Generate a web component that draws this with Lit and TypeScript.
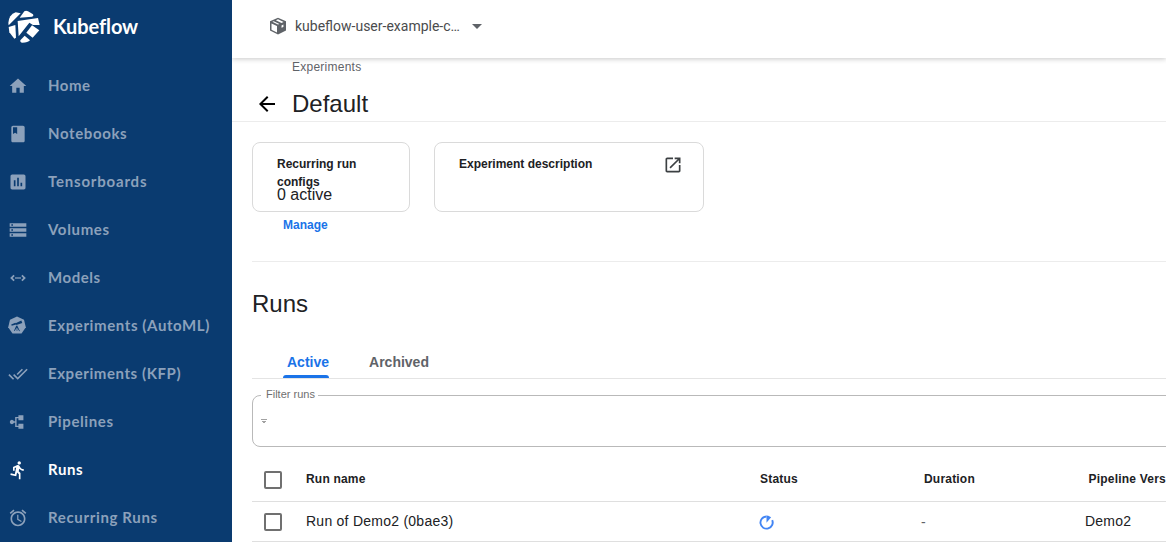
import { LitElement, html, svg, css } from "lit";
import { customElement, property } from "lit/decorators.js";
import { classMap } from "lit/directives/class-map.js";
import { styleMap } from "lit/directives/style-map.js";

interface NavItem {
  label: string;
  icon: string;
  tracking: number;
  active?: boolean;
}

const ICONS: Record<string, unknown> = {
  home: svg`<path d="M10 20v-6h4v6h5v-8h3L12 3 2 12h3v8z"/>`,
  book: svg`<path d="M18 2H6c-1.100 0-2 .9-2 2v16c0 1.100.9 2 2 2h12c1.100 0 2-.9 2-2V4c0-1.100-.9-2-2-2zM6 4h5v8l-2.500-1.500L6 12V4z"/>`,
  chart: svg`<path d="M19 3H5c-1.100 0-2 .9-2 2v14c0 1.100.9 2 2 2h14c1.100 0 2-.9 2-2V5c0-1.100-.9-2-2-2zM9 17H7v-7h2v7zm4 0h-2V7h2v10zm4 0h-2v-4h2v4z"/>`,
  storage: svg`<path d="M2 20h20v-4H2v4zm2-3h2v2H4v-2zM2 4v4h20V4H2zm4 3H4V5h2v2zm-4 7h20v-4H2v4zm2-3h2v2H4v-2z"/>`,
  ethernet: svg`<path d="M6.600 8L2.600 12l4 4 1.500-1.500L5.600 12l2.500-2.500zM17.400 8l4 4-4 4-1.500-1.500 2.500-2.500-2.500-2.500zM8.600 11h2v2h-2zM11 11h2v2h-2zM13.400 11h2v2h-2z"/>`,
  doneAll: svg`<path d="M18 7l-1.410-1.410-6.340 6.340 1.410 1.410L18 7zm4.240-1.410L11.660 16.170 7.480 12l-1.410 1.410L11.660 19l12-12-1.420-1.410zM.41 13.410L6 19l1.410-1.410L1.830 12 .41 13.410z"/>`,
  run: svg`<path d="M13.490 5.480c1.100 0 2-.9 2-2s-.9-2-2-2-2 .9-2 2 .9 2 2 2zm-3.600 13.900l1-4.400 2.100 2v6h2v-7.500l-2.100-2 .6-3c1.300 1.500 3.300 2.500 5.500 2.500v-2c-1.900 0-3.500-1-4.300-2.400l-1-1.600c-.4-.6-1-1-1.700-1-.3 0-.5.1-.8.1l-5.200 2.200v4.700h2v-3.400l1.800-.7-1.600 8.100-4.900-1-.4 2 7 1.400z"/>`,
  alarm: svg`<path d="M22 5.720l-4.600-3.860-1.290 1.530 4.600 3.860L22 5.720zM7.880 3.390L6.600 1.860 2 5.710l1.290 1.530 4.590-3.850zM12.500 8H11v6l4.750 2.850.75-1.230-4-2.370V8zM12 4c-4.970 0-9 4.030-9 9s4.020 9 9 9c4.970 0 9-4.030 9-9s-4.030-9-9-9zm0 16c-3.870 0-7-3.130-7-7s3.130-7 7-7 7 3.130 7 7-3.130 7-7 7z"/>`,
  pipeline: svg`<path d="M12.500 3.800h6v6h-6V7.500h-2.200v9h2.200v-2.300h6v6h-6V18H8.600v-5H7.200a2.600 2.600 0 1 1 0-2h1.400V6h3.900z"/>`,
  telescope: svg`<path d="M10 1.500l7 3.200 1.800 7.500-4.300 6.300H5.500L1.200 12.200 3 4.700z"/><path class="cut" d="M4.200 9.600l4.200-1.900.2.500 5.700-2.700 1 2.400-5.900 2.100-.2-.5-4.500 1.300zM9.200 10.800l1-.3 2.700 5.500-.7.300-1.900-3.600v3.400h-.6v-3.500l-2 3.500-.7-.3z"/>`,
  back: svg`<path d="M20 11H7.830l5.590-5.590L12 4l-8 8 8 8 1.410-1.410L7.830 13H20v-2z"/>`,
  open: svg`<path d="M19 19H5V5h7V3H5c-1.110 0-2 .9-2 2v14c0 1.100.89 2 2 2h14c1.100 0 2-.9 2-2v-7h-2v7zM14 3v2h3.590l-9.830 9.830 1.410 1.410L19 6.410V10h2V3h-7z"/>`,
  box: svg`<path fill-rule="evenodd" d="M12 2l9.600 4.200v11.300L12 22.300 2.400 17.500V6.200zM4.200 9v7.500l6.600 3.300v-7.700zM5.200 7l6.800 3.300 1.700-.8-6.800-3.200zM9.400 5.200l6.800 3.100 2.500-1.200L12 4zM16.200 11.300v2.900l2.300-1.100v-2.900z"/>`,
  progress: svg`<path d="M12 2v2.800A7.300 7.300 0 1 0 18.800 9.300l2.500-1.300A10 10 0 1 1 12 2z"/><path d="M12 12.500V2l2.500.3 4 2.300z"/>`,
};

const NAV: NavItem[] = [
  { label: "Home", icon: "home", tracking: 0.5 },
  { label: "Notebooks", icon: "book", tracking: 0.62 },
  { label: "Tensorboards", icon: "chart", tracking: 0.8 },
  { label: "Volumes", icon: "storage", tracking: 0.65 },
  { label: "Models", icon: "ethernet", tracking: 0.55 },
  { label: "Experiments (AutoML)", icon: "telescope", tracking: 0.6 },
  { label: "Experiments (KFP)", icon: "doneAll", tracking: 0.57 },
  { label: "Pipelines", icon: "pipeline", tracking: 0.6 },
  { label: "Runs", icon: "run", tracking: 0.6, active: true },
  { label: "Recurring Runs", icon: "alarm", tracking: 0.65 },
];

@customElement("kf-icon")
class KfIcon extends LitElement {
  @property() name = "";
  static styles = css`
    :host { display: block; width: 20px; height: 20px; flex: none; }
    .icon { display: block; width: 100%; height: 100%; fill: currentColor; }
    .cut { fill: #0a3b70; }
  `;
  render() {
    const box = this.name === "telescope" ? "0 0 20 20" : "0 0 24 24";
    return html`<svg class="icon" viewBox=${box}>${ICONS[this.name]}</svg>`;
  }
}

@customElement("kf-sidebar")
class KfSidebar extends LitElement {
  static styles = css`
    :host { display: block; width: 232px; height: 542px; flex: none; background: #0a3b70; overflow: hidden;
      font-family: Lato, "Open Sans", sans-serif; font-weight: 700; }
    .brand { display: flex; align-items: center; height: 62px; box-sizing: border-box; padding: 0 0 10px 8px; color: #fff; }
    .logo { width: 32px; height: 33px; fill: #fff; }
    .name { margin-left: 13px; font-size: 20px; letter-spacing: -0.1px; line-height: 24px; }
    .item { display: flex; align-items: center; height: 48px; padding-left: 8px; color: #8ca1bb; }
    .item.active { color: #fff; }
    .label { margin: -2px 0 0 20px; font-size: 15px; line-height: 20px; white-space: nowrap; }
    .telescope { margin: -3px 1.500px 0 -1.500px; }
  `;
  render() {
    return html`
      <div class="brand">
        <svg class="logo" viewBox="24 28 96 99">
          <path d="M26 74Q23 60 31 47Q37 38 47 35L62 38Z"/>
          <path d="M59 51L73 32Q78 29 84 32L99 41Q102 47 96 48Z"/>
          <path d="M26 79L46 73L48 111L43 114L28 95Z"/>
          <path d="M53 61L114 52L119 73L99 73L88 66L56 107Z"/>
          <path d="M96 74L118 89L98 111L79 96Z"/>
          <path d="M74 105L90 119Q84 126 67 126Q60 126 61 119Z"/>
        </svg>
        <span class="name">Kubeflow</span>
      </div>
      ${NAV.map(
        (n) => html`<div class=${classMap({ item: true, active: !!n.active })}>
          <kf-icon class=${n.icon} name=${n.icon}></kf-icon>
          <span class="label" style=${styleMap({ letterSpacing: `${n.tracking}px` })}>${n.label}</span>
        </div>`
      )}
    `;
  }
}

@customElement("app-root")
class AppRoot extends LitElement {
  static styles = css`
    :host { display: flex; width: 1166px; height: 542px; overflow: hidden; background: #fff; color: #202124;
      font-family: "Liberation Sans", Arial, sans-serif; }
    .main { flex: 1; min-width: 0; overflow: hidden; display: flex; flex-direction: column; }
    .topbar { flex: none; height: 58px; box-sizing: border-box; display: flex; align-items: center; padding: 0 0 6px 36px;
      box-shadow: 0 1px 5px rgba(0, 0, 0, 0.22); color: #5f6368; font-family: Roboto, sans-serif; font-size: 14px; }
    .namespace { margin-left: 7px; color: #4a4b4d; width: 166px; white-space: nowrap; }
    .caret { margin-left: 11px; border: 5px solid transparent; border-top-color: #5f6368; border-bottom: 0; }
    .pagehead { flex: none; height: 64px; box-sizing: border-box; border-bottom: 1px solid #ececec; padding-left: 23px; }
    .crumb { padding-left: 37px; font-size: 12px; line-height: 18px; letter-spacing: 0.25px; color: #5f6368; }
    .titlerow { display: flex; align-items: center; height: 56px; color: #000; }
    .back { width: 24px; height: 24px; }
    .title { margin-left: 13px; font-size: 24px; color: #202124; }
    .content { padding-left: 20px; }
    .cards { display: flex; gap: 24px; height: 140px; padding-top: 20px; box-sizing: border-box; border-bottom: 1px solid #ececec; }
    .card { box-sizing: border-box; height: 70px; border: 1px solid #dadada; border-radius: 8px; padding: 12px 24px 0; }
    .configs { width: 158px; }
    .description { width: 270px; display: flex; justify-content: space-between; padding-right: 20px; }
    .cardtitle { font-size: 12px; font-weight: 700; line-height: 18px; }
    .count { font-size: 16px; line-height: 18px; margin-top: -5px; }
    .manage { font-size: 12px; font-weight: 700; line-height: 18px; color: #1a73e8; margin: 12px 0 0 6px; }
    .open { color: #3c4043; }
    .heading { font-size: 24px; line-height: 28px; padding-top: 28px; }
    .tabs { display: flex; gap: 40px; height: 60px; padding-left: 35px; align-items: flex-end; border-bottom: 1px solid #e4e4e4;
      font-size: 14px; font-weight: 700; color: #5f6368; }
    .tab { height: 27px; line-height: 22px; position: relative; }
    .tab.active { color: #1a73e8; padding-left: 4px; margin-left: -4px; }
    .tab.active::after { content: ""; position: absolute; left: 0; right: 0; bottom: 0; height: 3px; border-radius: 3px 3px 0 0; background: #1a73e8; }
    .filter { box-sizing: border-box; width: 1000px; height: 61px; margin: 7px 0 0; padding: 0 0 0 7px; border: 1px solid #b9b9b9; border-radius: 8px; }
    .legend { margin-left: 1px; padding: 0 3px 2px 5px; font-size: 11px; line-height: 16px; color: #6f6f6f; }
    .filtericon { display: block; width: 8px; height: 5px; margin-top: 15px; fill: #a2a2a2; }
    .row { display: grid; grid-template-columns: 54px 454px 164px 164px 200px; width: 1036px; box-sizing: border-box;
      height: 40px; align-items: center; border-bottom: 1px solid #dfdfdf; font-size: 14px; }
    .row.head { height: 55px; font-size: 12px; font-weight: 700; letter-spacing: 0.2px; }
    .check { box-sizing: border-box; width: 18px; height: 18px; margin-left: 12px; border: 2px solid #707070; border-radius: 2px; }
    .head .check { margin-top: 12px; }
    .head span { margin-top: 9px; }
    .runname { letter-spacing: 0.25px; margin-top: -2px; }
    .progress { width: 17px; height: 17px; margin: 1px 0 0 -2.500px; color: #4285f4; }
    .dash { margin: 0 0 0 -3px; color: #5f6368; }
    .version { margin: -2px 0 0 -3px; letter-spacing: 0.2px; }
    .head .pv { margin-left: 0.600px; }
  `;
  render() {
    return html`
      <kf-sidebar></kf-sidebar>
      <div class="main">
        <div class="topbar">
          <kf-icon name="box"></kf-icon>
          <span class="namespace">kubeflow-user-example-c…</span>
          <i class="caret"></i>
        </div>
        <div class="pagehead">
          <div class="crumb">Experiments</div>
          <div class="titlerow"><kf-icon class="back" name="back"></kf-icon><span class="title">Default</span></div>
        </div>
        <div class="content">
          <div class="cards">
            <div class="card configs">
              <div class="cardtitle">Recurring run configs</div>
              <div class="count">0 active</div>
              <div class="manage">Manage</div>
            </div>
            <div class="card description">
              <span class="cardtitle">Experiment description</span>
              <kf-icon class="open" name="open"></kf-icon>
            </div>
          </div>
          <div class="heading">Runs</div>
          <div class="tabs"><span class="tab active">Active</span><span class="tab">Archived</span></div>
          <fieldset class="filter">
            <legend class="legend">Filter runs</legend>
            <svg class="filtericon" viewBox="0 0 8 5"><path d="M1 0h6v1H1zM2 2h4v1H2zM3 3h2v1H3z"/></svg>
          </fieldset>
          <div class="row head"><i class="check"></i><span>Run name</span><span>Status</span><span>Duration</span><span class="pv">Pipeline Version</span></div>
          <div class="row">
            <i class="check"></i><span class="runname">Run of Demo2 (0bae3)</span>
            <kf-icon class="progress" name="progress"></kf-icon>
            <span class="dash">-</span><span class="version">Demo2</span>
          </div>
        </div>
      </div>
    `;
  }
}
